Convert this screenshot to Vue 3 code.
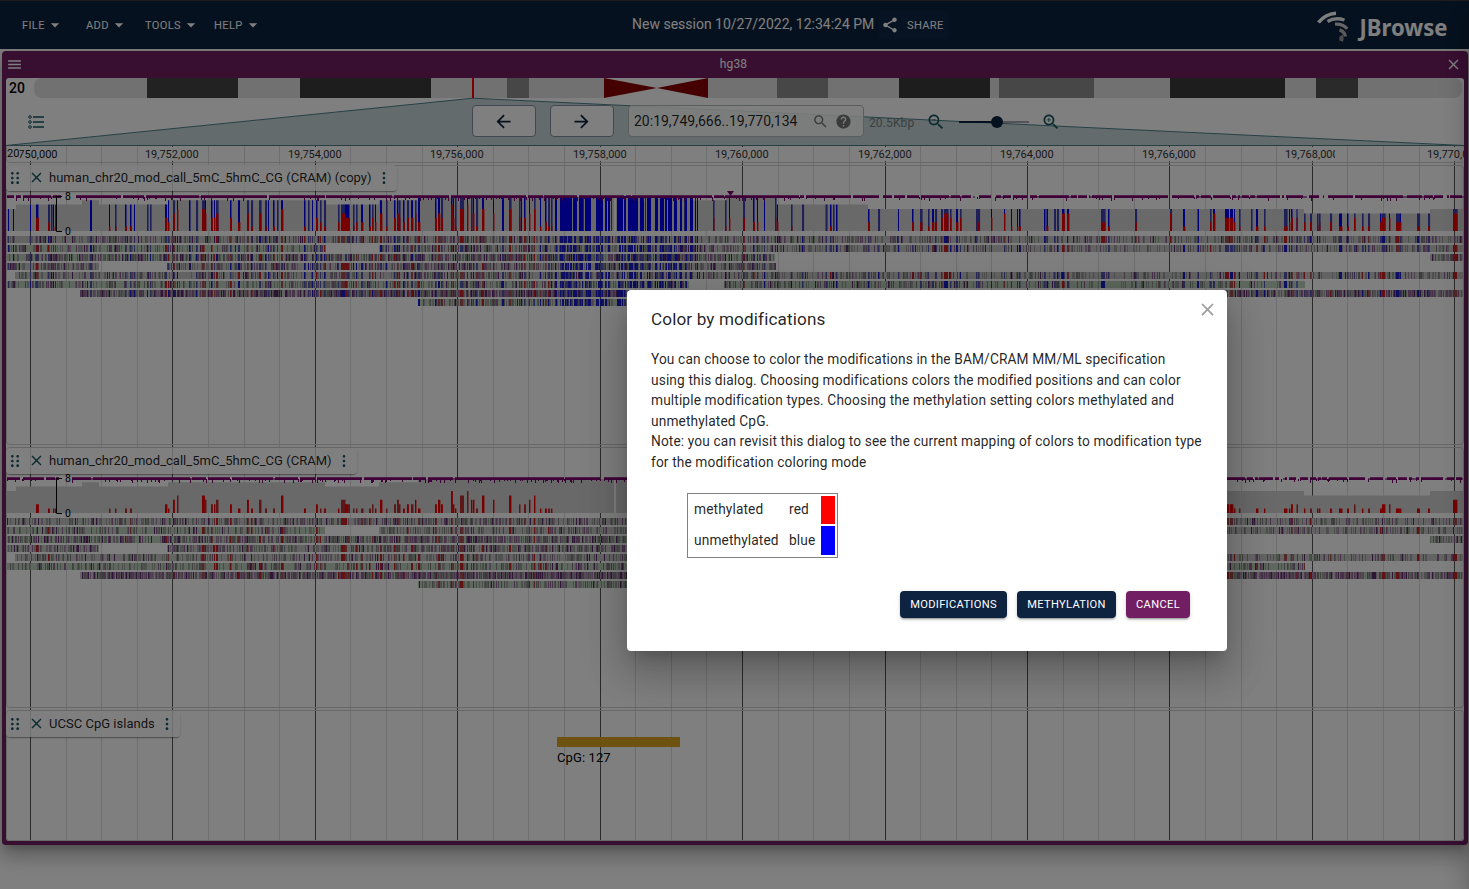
<script setup>
const icons = {
  drop: 'M7 10l5 5 5-5z',
  share: 'M18 16.08c-.76 0-1.44.3-1.96.77L8.91 12.7c.05-.23.09-.46.09-.7s-.04-.47-.09-.7l7.05-4.11c.54.5 1.25.81 2.04.81 1.66 0 3-1.34 3-3s-1.34-3-3-3-3 1.34-3 3c0 .24.04.47.09.7L8.04 9.81C7.5 9.31 6.79 9 6 9c-1.66 0-3 1.34-3 3s1.34 3 3 3c.79 0 1.5-.31 2.04-.81l7.12 4.16c-.05.21-.08.43-.08.65 0 1.61 1.31 2.92 2.92 2.92 1.61 0 2.92-1.31 2.92-2.92s-1.31-2.92-2.92-2.92z',
  close: 'M19 6.41L17.59 5 12 10.59 6.41 5 5 6.41 10.59 12 5 17.59 6.41 19 12 13.41 17.59 19 19 17.59 13.41 12z',
  back: 'M20 11H7.83l5.59-5.59L12 4l-8 8 8 8 1.41-1.41L7.83 13H20v-2z',
  forward: 'M12 4l-1.41 1.41L16.17 11H4v2h12.17l-5.58 5.59L12 20l8-8z',
  search: 'M15.5 14h-.79l-.28-.27C15.41 12.59 16 11.11 16 9.5 16 5.91 13.09 3 9.5 3S3 5.91 3 9.5 5.91 16 9.5 16c1.61 0 3.09-.59 4.23-1.57l.27.28v.79l5 4.99L20.49 19l-4.99-5zm-6 0C7.01 14 5 11.99 5 9.5S7.01 5 9.5 5 14 7.01 14 9.5 11.99 14 9.5 14z',
  help: 'M12 2C6.48 2 2 6.48 2 12s4.48 10 10 10 10-4.48 10-10S17.52 2 12 2zm1 17h-2v-2h2v2zm2.07-7.75l-.9.92C13.45 12.9 13 13.5 13 15h-2v-.5c0-1.1.45-2.1 1.17-2.83l1.24-1.26c.37-.36.59-.86.59-1.41 0-1.1-.9-2-2-2s-2 .9-2 2H8c0-2.21 1.79-4 4-4s4 1.79 4 4c0 .88-.36 1.68-.93 2.25z',
  zoomOut: 'M15.5 14h-.79l-.28-.27C15.41 12.59 16 11.11 16 9.5 16 5.91 13.09 3 9.5 3S3 5.91 3 9.5 5.91 16 9.5 16c1.61 0 3.09-.59 4.23-1.57l.27.28v.79l5 4.99L20.49 19l-4.99-5zm-6 0C7.01 14 5 11.99 5 9.5S7.01 5 9.5 5 14 7.01 14 9.5 11.99 14 9.5 14zM7 9h5v1H7z',
  zoomIn: 'M15.5 14h-.79l-.28-.27C15.41 12.59 16 11.11 16 9.5 16 5.91 13.09 3 9.5 3S3 5.91 3 9.5 5.91 16 9.5 16c1.61 0 3.09-.59 4.23-1.57l.27.28v.79l5 4.99L20.49 19l-4.99-5zm-6 0C7.01 14 5 11.99 5 9.5S7.01 5 9.5 5 14 7.01 14 9.5 11.99 14 9.5 14zm2.5-4h-2v2H9v-2H7V9h2V7h1v2h2v1z',
  menu: 'M3 18h18v-2H3v2zm0-5h18v-2H3v2zm0-7v2h18V6H3z',
  drag: 'M10 19c0 1.1-.9 2-2 2s-2-.9-2-2 .9-2 2-2 2 .9 2 2zm-2-9c-1.1 0-2 .9-2 2s.9 2 2 2 2-.9 2-2-.9-2-2-2zm0-7c-1.1 0-2 .9-2 2s.9 2 2 2 2-.9 2-2-.9-2-2-2zm8 4c1.1 0 2-.9 2-2s-.9-2-2-2-2 .9-2 2 .9 2 2 2zm0 3c-1.1 0-2 .9-2 2s.9 2 2 2 2-.9 2-2-.9-2-2-2zm0 7c-1.1 0-2 .9-2 2s.9 2 2 2 2-.9 2-2-.9-2-2-2z',
  more: 'M12 7c1.1 0 2-.9 2-2s-.9-2-2-2-2 .9-2 2 .9 2 2 2zm0 3c-1.1 0-2 .9-2 2s.9 2 2 2 2-.9 2-2-.9-2-2-2zm0 7c-1.1 0-2 .9-2 2s.9 2 2 2 2-.9 2-2-.9-2-2-2z',
}
const menus = ['FILE', 'ADD', 'TOOLS', 'HELP']

const bands = [
  [147, 91, '#444'], [300, 131, '#3a3a3a'], [507, 22, '#8f8f8f'], [777, 51, '#8f8f8f'],
  [899, 91, '#3a3a3a'], [999, 95, '#8f8f8f'], [1170, 115, '#3a3a3a'], [1316, 42, '#555'],
]

// Grid lines every 500 bp, labelled every 2,000 bp
const majors = []
const minors = []
for (let i = 0; i < 41; i++) {
  const x = Math.floor(30.4 + i * 35.61)
  if (i % 4 === 0) majors.push({ x, label: '19,' + (750 + i / 2) + ',000' })
  else if (x < 1463) minors.push(x)
}

function rng(seed) {
  let s = seed
  return () => {
    s = (s * 1664525 + 1013904223) % 4294967296
    return s / 4294967296
  }
}
const rect = (x, y, w, h) => `M${x.toFixed(1)} ${y.toFixed(1)}h${w}v${h}h${-w}z`

// Depth profile: [start, end, reads]
const depth = [
  [7, 16, 5], [16, 82, 6], [82, 99, 7], [99, 168, 6], [168, 325, 7], [325, 379, 6], [379, 418, 7],
  [418, 614, 8], [616, 690, 8], [690, 726, 7], [726, 776, 8], [776, 868, 6], [868, 1304, 5], [1304, 1430, 4], [1430, 1463, 5],
]
// CpG sites: position, methylated reads, width
const sites = [
  [8, 0, 1], [13, 0, 1], [30, 0, 1], [36, 3, 2.5], [48, 2, 1.5], [51, 0, 1], [53, 1, 1], [55, 1, 1], [90, 0, 2], [109, 1, 1], [115, 1, 1],
  [125, 1, 1.5], [130, 1, 1.5], [134, 0, 1], [147, 0, 1], [150, 0, 1], [165, 3, 2], [168, 2, 1], [173, 4, 1.5], [177, 5, 1], [189, 0, 1.5],
  [196, 0, 1.5], [202, 5, 2.5], [205, 4, 1], [211, 3, 1.5], [214, 3, 1], [216, 4, 2], [230, 3, 1.5], [238, 2, 2], [247, 4, 1.5], [251, 1, 1.5],
  [259, 4, 2], [265, 1, 1.5], [268, 0, 1], [273, 1, 1.5], [277, 0, 1], [281, 5, 2], [304, 1, 1.5], [308, 0, 1], [312, 0, 1], [316, 3, 1.5],
  [320, 2, 1], [324, 1, 1.5], [338, 2, 1], [341, 4, 4], [345, 3, 2], [347, 3, 2.5], [353, 1, 1], [356, 2, 1], [361, 2, 2], [369, 1, 1.5],
  [372, 3, 1], [375, 2, 1], [380, 4, 2], [386, 1, 1], [394, 3, 1.5], [397, 4, 1.5], [399, 3, 1], [403, 2, 1.5], [407, 3, 1.5], [411, 3, 2],
  [415, 4, 1], [418, 2, 2], [435, 3, 1.5], [438, 4, 2], [441, 3, 1.5], [451, 6, 1.5], [453, 3, 1], [455, 1, 1], [460, 5, 3.5], [467, 6, 1],
  [471, 4, 1], [473, 4, 1], [476, 1, 1.5], [482, 5, 2], [493, 4, 1], [502, 0, 2], [509, 5, 2], [519, 3, 1], [521, 0, 1], [524, 3, 1.5],
  [529, 4, 1], [534, 5, 1], [540, 1, 1], [545, 2, 1.5], [548, 1, 1.5], [551, 1, 1], [713, 3, 1], [725, 1, 1], [729, 3, 1], [743, 3, 1.5],
  [753, 2, 1.5], [757, 2, 1], [764, 0, 1], [775, 3, 1], [777, 2, 1], [791, 1, 1], [802, 0, 1.5], [825.5, 0, 1.5], [830, 1, 1.5], [833, 0, 1],
  [836, 0, 1.5], [868, 2, 1.5], [878, 0, 1.5], [898, 0, 1], [912, 2, 1.5], [920, 2, 2], [928, 1, 1], [932, 2, 2], [935, 2, 1.5], [941, 3, 1.5],
  [944, 4, 4], [950, 3, 1], [956, 2, 2], [960, 3, 1], [976, 0, 1.5], [978, 2, 1.5], [991, 3, 1], [1004, 4, 1], [1011, 1, 1], [1017, 1, 1],
  [1019, 1, 1.5], [1044, 0, 1.5], [1046.5, 1, 1.5], [1054, 0, 1.5], [1057, 0, 1.5], [1062, 4, 2.5], [1067, 4, 2], [1101, 2, 4], [1108, 1, 1.5],
  [1135, 2, 1.5], [1170, 4, 1.5], [1183, 1, 2], [1197.5, 0, 1.5], [1210, 2, 1], [1213, 4, 2], [1225, 3, 4], [1230, 3, 3], [1234, 2, 1],
  [1239, 1, 1], [1251, 0, 1], [1256, 1, 2], [1264, 1, 1], [1284, 1, 3], [1289, 2, 1], [1291, 3, 1.5], [1296.5, 3, 1], [1304, 2, 1],
  [1310, 2, 1.5], [1317, 1, 1], [1319, 2, 1], [1330, 2, 1.5], [1339, 1, 3], [1347, 1, 1.5], [1354, 3, 1], [1362, 1, 1], [1368, 1, 1.5],
  [1380, 2, 1.5], [1382, 3, 3], [1389, 3, 1], [1396, 2, 3.5], [1400, 2, 1], [1417, 1, 2.5], [1428, 1, 1.5], [1453, 4, 4],
]
// Fully unmethylated stretch
const island = [
  [555, 2], [560, 12], [573, 4], [579, 4], [585, 6], [596, 7], [605, 2], [608, 2], [617, 6], [624, 2], [628, 10], [640, 4],
  [647, 4], [655, 3], [660, 4], [665, 2], [668, 4], [674, 3], [680, 2], [685, 2], [690, 3], [695, 1], [697, 1],
]
const level = x => (depth.find(d => x >= d[0] && x < d[1]) || [0, 0, 8])[2]
const inSpan = (x, spans) => spans.some(s => x >= s[0] && x < s[1])

// Read rows: spans and base colours, density of mismatches
const gray = '#c6c6c6'
const green = '#bdd0bd'
const reads = [
  { spans: [[7, 1463, gray]], d: 0.5, p: 0.36 },
  { spans: [[7, 325, green], [379, 1463, gray]], d: 0.44, p: 0.28 },
  { spans: [[7, 775, green], [1430, 1463, gray]], d: 0.68, p: 0.5 },
  { spans: [[7, 99, gray], [167, 776, gray]], d: 0.58, p: 0.4 },
  { spans: [[15, 1463, gray]], d: 0.44, p: 0.28 },
  { spans: [[7, 689, green], [724, 1305, green]], d: 0.44, p: 0.28 },
  { spans: [[80, 1463, gray]], d: 0.84, p: 0.62 },
  { spans: [[418, 698, green]], d: 0.47, p: 0.25 },
]

function buildTrack(dy, showBlue, seed) {
  const r = rng(seed)
  const paths = []
  const add = (fill, d) => d && paths.push({ fill, d })
  const zero = 231 + dy
  const unit = 4.4
  let cov = ''
  for (const [a, b, n] of depth) cov += rect(a, zero - n * unit + (n === 8 ? 1 : 0), b - a, n * unit - (n === 8 ? 1 : 0))
  add('#d3d3d3', cov)
  let blue = '', blueSoft = '', red = '', redSoft = ''
  for (const [x, n, w] of sites) {
    const h = level(x) * unit - (level(x) === 8 ? 1 : 0)
    if (showBlue) {
      if (r() < 0.5) blue += rect(x, zero - h, w, h)
      else blueSoft += rect(x, zero - h, w + 0.6, h)
    }
    const m = showBlue ? n : n > 1 ? n - 1 : n
    if (m && (showBlue || r() < 0.6)) red += rect(x, zero - m * unit, w + 0.4, m * unit)
    else if (m) redSoft += rect(x, zero - m * unit, w + 0.5, m * unit)
  }
  if (showBlue) {
    for (const [x, w] of island) blue += rect(x, 196 + dy, w, 35)
    for (let x = 555; x < 698; x += 2 + Math.floor(r() * 3)) if (r() < 0.45) blueSoft += rect(x, 197 + dy, 1, 34)
  }
  add('#4040b0', blueSoft)
  add('#0000f0', blue)
  add('#b83030', redSoft)
  add('#f00000', red)

  // Interbase indicators along the top of the coverage plot
  let dash = '', dashSoft = ''
  for (let x = 7; x < 1463;) {
    let w = 1 + Math.floor(r() * 5)
    const gap = x > 868 || x < 75 ? 0.25 : 0.06
    const open = x > 56 && x < 72
    if (r() > gap) {
      if (!open) dash += rect(x, 195.3 + dy, w, 2.6)
    } else {
      w = Math.min(w, 2)
      if (r() < 0.3 && !open) dashSoft += rect(x, 196 + dy, w, 2)
    }
    if (!open && r() < (x > 418 && x < 700 ? 0.6 : x > 868 ? 0.25 : 0.42)) dash += rect(x, 197 + dy, 1, 2 + Math.floor(r() * 3))
    x += w
  }
  add('#b070b0', dashSoft)
  add('#800070', dash)

  const groups = { '#a0a0a0': '', '#808080': '', '#90a090': '', '#906494': '', '#a084a4': '', '#602c6c': '' }
  const keys = Object.keys(groups)
  reads.forEach((row, i) => {
    const y = 236 + dy + i * 9
    let siteBlue = '', siteRed = '', redMuted = '', bluish = ''
    const marks = { ...groups }
    for (const [a, b, fill] of row.spans) {
      add(fill, rect(a, y, b - a, 7))
      for (let x = a; x < b - 1; x++) {
        const dense = x > 418 && x < 700 ? 1.15 : x > 868 && row.p < 0.5 ? 0.85 : 1
        if (r() > row.d * dense) continue
        let key
        if (r() < row.p) key = r() < 0.5 ? keys[3] : r() < 0.5 ? keys[4] : keys[5]
        else key = r() < 0.5 ? keys[0] : r() < 0.5 ? keys[1] : keys[2]
        marks[key] += rect(x, y, 1, 7)
      }
    }
    for (const k in marks) add(k, marks[k])
    for (const [x, n, w] of sites) {
      if (!inSpan(x, row.spans)) continue
      const t = r()
      if (t < n / 8) {
        if (r() < 0.6) siteRed += rect(x, y, w, 7)
        else redMuted += rect(x, y, w, 7)
      } else if (showBlue && t < 0.8) {
        if (r() < 0.35) siteBlue += rect(x, y, w, 7)
        else bluish += rect(x, y, w, 7)
      }
    }
    if (showBlue) {
      for (const [x, w] of island) {
        if (!inSpan(x, row.spans)) continue
        for (let k = 0; k < w; k++) {
          const t = r()
          if (t < 0.55) siteBlue += rect(x + k, y, 1, 7)
          else if (t < 0.8) bluish += rect(x + k, y, 1, 7)
        }
      }
    }
    add('#5555ac', bluish)
    add('#1c1cc8', siteBlue)
    add('#a85050', redMuted)
    add('#c42424', siteRed)
  })
  return paths
}
const trackPaths = [...buildTrack(0, true, 11), ...buildTrack(282, false, 47)]

const tracks = [
  { name: 'human_chr20_mod_call_5mC_5hmC_CG (CRAM) (copy)', cls: 'first' },
  { name: 'human_chr20_mod_call_5mC_5hmC_CG (CRAM)', cls: 'second' },
  { name: 'UCSC CpG islands', cls: 'third' },
]
const legend = [
  { state: 'methylated', color: 'red' },
  { state: 'unmethylated', color: 'blue' },
]
</script>

<template>
  <div class="app">
    <header class="bar">
      <nav class="menus">
        <button v-for="m in menus" :key="m" class="menu">{{ m }}<svg viewBox="0 0 24 24"><path :d="icons.drop" /></svg></button>
      </nav>
      <span class="session">New session 10/27/2022, 12:34:24 PM</span>
      <button class="share"><svg viewBox="0 0 24 24"><path :d="icons.share" /></svg>SHARE</button>
      <svg class="brand" viewBox="1314 8 136 36">
        <g fill="none">
          <path d="M1318.5 22.5Q1325 14 1336 13.2" stroke="#fff" stroke-width="3.6" />
          <path d="M1327.5 21.5Q1335 17 1344.5 20" stroke="#eee" stroke-width="3.4" />
          <path d="M1335 24.2Q1342.5 23.5 1347.2 28.8" stroke="#ccc" stroke-width="3.2" />
          <path d="M1339.5 29.8Q1344.5 31.5 1345.5 36.5" stroke="#b4b4b4" stroke-width="3.4" />
          <path d="M1340.8 35.8Q1342.3 38 1341 41" stroke="#999" stroke-width="4" />
        </g>
        <text x="1359.5" y="36" textLength="88" lengthAdjust="spacingAndGlyphs">JBrowse</text>
      </svg>
    </header>

    <main class="view">
      <div class="titlebar">
        <svg class="burger" viewBox="0 0 24 24"><path :d="icons.menu" /></svg>
        <span>hg38</span>
        <svg class="shut" viewBox="0 0 24 24"><path :d="icons.close" /></svg>
      </div>

      <div class="content">
        <div class="overview">
          <svg class="canvas" viewBox="6 78 1458 68">
            <clipPath id="chrom"><rect x="34" y="78" width="1428" height="20" rx="8" /></clipPath>
            <g clip-path="url(#chrom)">
              <rect x="34" y="78" width="1428" height="20" fill="#e2e2e2" />
              <rect v-for="b in bands" :key="b[0]" :x="b[0]" y="78" :width="b[1]" height="20" :fill="b[2]" />
              <rect x="604" y="78" width="104" height="20" fill="#fff" />
              <path d="M604 78L657 88L604 98zM708 78L657 88L708 98z" fill="#8b0000" />
            </g>
            <text class="refname" x="9" y="93">20</text>
            <path d="M6 145.5L472 98.3H474.5L1464 145.5z" fill="#c6d6d8" stroke="#4d8189" />
            <rect x="472" y="78" width="2" height="20" fill="#f00" />
          </svg>
          <div class="controls">
            <svg class="selector" viewBox="0 0 16 14">
              <path d="M5 2h11M5 7h11M5 12h11" stroke-width="1.5" />
              <circle cx="2" cy="2" r="1.3" /><circle cx="2" cy="7" r="1.3" /><circle cx="2" cy="12" r="1.3" />
            </svg>
            <button class="pan"><svg viewBox="0 0 24 24"><path :d="icons.back" /></svg></button>
            <button class="pan"><svg viewBox="0 0 24 24"><path :d="icons.forward" /></svg></button>
            <div class="location">
              <span>20:19,749,666..19,770,134</span>
              <svg viewBox="0 0 24 24"><path :d="icons.search" /></svg>
              <svg viewBox="0 0 24 24"><path :d="icons.help" /></svg>
            </div>
            <span class="bp">20.5Kbp</span>
            <svg class="zoom" viewBox="0 0 24 24"><path :d="icons.zoomOut" /></svg>
            <div class="slider"><i></i></div>
            <svg class="zoom" viewBox="0 0 24 24"><path :d="icons.zoomIn" /></svg>
          </div>
        </div>

        <div class="tracks">
          <svg class="canvas" viewBox="6 146 1458 695">
            <g fill="#dcdcdc"><rect v-for="x in minors" :key="x" :x="x" y="146" width="1" height="695" /></g>
            <g fill="#555"><rect v-for="m in majors" :key="m.x" :x="m.x" y="146" width="1" height="695" /></g>
            <g fill="none" stroke="#d0d0d0">
              <rect x="6.5" y="142.5" width="1457" height="20" rx="3" />
              <rect x="6.5" y="165.5" width="1457" height="279" rx="3" />
              <rect x="6.5" y="447.5" width="1457" height="260" rx="3" />
              <rect x="6.5" y="710.5" width="1457" height="130" rx="3" />
            </g>
            <g class="ticks">
              <template v-for="(m, i) in majors" :key="m.x">
                <rect :x="m.x - (i ? 27 : 23)" y="147" :width="i ? 56 : 51" height="14" fill="#fff" />
                <text v-if="i" :x="m.x - 0.2" y="158">{{ m.label }}</text>
                <text v-else class="start" x="18.3" y="158">750,000</text>
              </template>
              <rect x="1335" y="148" width="6" height="12" fill="#fff" />
              <rect x="7" y="147" width="12.5" height="14" fill="#fff" />
              <text class="start" x="7" y="157">20</text>
            </g>
            <path v-for="(p, i) in trackPaths" :key="i" :fill="p.fill" :d="p.d" />
            <path d="M727 191h7l-3.5 5z" fill="#800070" />
            <g v-for="y in [196, 478]" :key="y">
              <path :d="`M62 ${y + 0.5}H56.5V${y + 35.5}H62`" fill="none" stroke="#000" />
              <text class="axis" x="65" :y="y + 4">8</text>
              <text class="axis" x="65" :y="y + 39">0</text>
            </g>
            <rect x="557" y="737" width="123" height="10" fill="#daa520" />
            <text class="feature" x="557" y="762">CpG: 127</text>
          </svg>
          <section v-for="t in tracks" :key="t.name" :class="['track', t.cls]">
            <div class="label">
              <svg class="drag" viewBox="0 0 24 24"><path :d="icons.drag" /></svg>
              <svg class="x" viewBox="0 0 24 24"><path :d="icons.close" /></svg>
              <span>{{ t.name }}</span>
              <svg class="more" viewBox="0 0 24 24"><path :d="icons.more" /></svg>
            </div>
          </section>
        </div>
      </div>
    </main>

    <div class="drawer"></div>
    <div class="backdrop">
      <div class="dialog">
        <svg class="dismiss" viewBox="0 0 24 24"><path :d="icons.close" /></svg>
        <h2>Color by modifications</h2>
        <p>You can choose to color the modifications in the BAM/CRAM MM/ML specification using&nbsp;this dialog. Choosing modifications colors the modified positions and can color multiple modification types. Choosing the methylation setting colors methylated and unmethylated CpG.<br />Note: you can revisit this dialog to see the current mapping of colors to modification type for the modification coloring mode</p>
        <div class="legend">
          <template v-for="l in legend" :key="l.state">
            <span>{{ l.state }}</span><span>{{ l.color }}</span><i :class="l.color"></i>
          </template>
        </div>
        <div class="actions">
          <button class="modifications">MODIFICATIONS</button>
          <button class="methylation">METHYLATION</button>
          <button class="cancel">CANCEL</button>
        </div>
      </div>
    </div>
  </div>
</template>

<style>
html, body { margin: 0; height: 100%; overflow: hidden; background: #fff; }
</style>

<style scoped>
.app { position: relative; width: 1469px; height: 889px; overflow: hidden; font-family: Roboto, "Liberation Sans", sans-serif; color: rgba(0, 0, 0, .87); background: #fff; }
.app *, .app { box-sizing: border-box; }
button { font: inherit; border: 0; padding: 0; margin: 0; background: none; color: inherit; }
svg { display: block; flex: none; }
.bar { position: relative; z-index: 1; height: 49px; border-top: 1px solid #3a3a3a; background: #0d233f; color: #fff; display: flex; align-items: center; }
.bar svg { fill: currentColor; }
.menus { display: grid; grid-template-columns: 64px 59px 69px 1fr; width: 632px; padding-left: 22px; }
.menu { display: flex; align-items: center; font-size: 11.14px; letter-spacing: .32px; }
.menu svg { width: 20px; height: 20px; }
.session { width: 247px; font-size: 14px; letter-spacing: 0; white-space: nowrap; position: relative; top: -1px; }
.share { display: flex; align-items: center; gap: 8px; width: 70px; height: 28px; padding-left: 2px; border-radius: 4px; background: #0f2744; font-size: 11.14px; letter-spacing: .32px; }
.share svg { width: 18px; height: 18px; }
.brand { width: 136px; height: 36px; margin-left: auto; margin-right: 19px; position: relative; top: 1px; }
.brand text { font: 700 22.5px "Noto Sans", "Open Sans", sans-serif; }
.view { display: flex; flex-direction: column; margin: 2px 1px 0 2px; height: 794px; padding: 0 4px 4px; border-radius: 4px; background: #721e63; box-shadow: 0 7px 8px -4px rgba(0,0,0,.2), 0 12px 17px 2px rgba(0,0,0,.14), 0 5px 22px 4px rgba(0,0,0,.12); }
.titlebar { height: 27px; display: flex; align-items: center; justify-content: space-between; padding: 0 2px 0 0; color: #fff; font-size: 12px; letter-spacing: .13px; }
.titlebar span { position: relative; left: -.5px; top: -1px; }
.titlebar svg { fill: #fff; width: 17px; height: 17px; }
.content { width: 1458px; height: 763px; background: #fff; border-radius: 3px; overflow: hidden; }
.overview { position: relative; height: 68px; padding-top: 20px; }
.canvas { position: absolute; left: 0; top: 0; width: 100%; height: 100%; }
.refname { font-size: 14px; font-weight: 500; fill: #000; }
.controls { position: relative; height: 46px; display: flex; align-items: center; padding-left: 22px; }
.selector { width: 16px; height: 14px; margin: 2px 428px 0 0; fill: none; stroke: #135560; }
.pan { width: 63.5px; height: 32px; margin-right: 14.5px; border: 1px solid #8691a0; border-radius: 4px; background: #fff; display: grid; place-items: center; }
.pan svg { width: 21px; height: 21px; fill: #0d233f; }
.location { width: 236px; height: 32px; border: 1px solid #b5bcbd; border-radius: 4px; background: rgba(255,255,255,.85); display: flex; align-items: center; padding-left: 5px; }
.location span { width: 178px; font-size: 14px; }
.location svg { width: 17px; height: 17px; margin-right: 6px; fill: #757575; }
.bp { width: 62px; padding: 3px 0 0 5px; font-size: 12px; letter-spacing: .13px; color: #758082; }
.zoom { width: 20px; height: 20px; margin-top: 2px; fill: #135560; }
.slider { width: 70px; height: 2px; margin: 2px 12px 0 13px; background: linear-gradient(90deg, #0d233f 38px, #a3a7b2 38px); display: flex; align-items: center; }
.slider i { width: 12px; height: 12px; margin-left: 32px; border-radius: 50%; background: #0d233f; flex: none; }
.tracks { position: relative; height: 695px; padding-top: 19px; }
.ticks text { font-size: 11px; text-anchor: middle; fill: #333; }
.ticks text.start { font-size: 11px; text-anchor: start; fill: #111; }
.axis { font-size: 10.5px; fill: #000; }
.feature { font-size: 13px; letter-spacing: .1px; fill: #000; }
.track { position: relative; }
.first { height: 283px; }
.second { height: 263px; }
.label { display: inline-flex; align-items: center; height: 26px; padding: 0 5px 2px 1px; border-radius: 4px; background: rgba(255,255,255,.8); box-shadow: 0 2px 1px -1px rgba(0,0,0,.2), 0 1px 1px rgba(0,0,0,.14), 0 1px 3px rgba(0,0,0,.12); font-size: 13px; letter-spacing: .02px; white-space: nowrap; }
.label svg { fill: #135560; position: relative; top: .5px; }
.drag { width: 16px; height: 16px; }
.x { width: 17px; height: 17px; margin: 0 4px 0 4.5px; }
.label span { padding-left: .5px; }
.more { width: 16px; height: 16px; margin-left: 4px; }
.drawer { position: absolute; left: 1472px; top: 0; width: 100px; height: 889px; z-index: 2; box-shadow: 0 8px 10px -5px rgba(0,0,0,.2), 0 16px 24px 2px rgba(0,0,0,.14), 0 6px 30px 5px rgba(0,0,0,.12); }
.backdrop { position: absolute; inset: 0; z-index: 3; background: rgba(0,0,0,.5); padding: 290px 0 0 627px; }
.dialog { position: relative; width: 600px; height: 361px; padding: 16px 24px; background: #fff; border-radius: 4px; box-shadow: 0 11px 15px -7px rgba(0,0,0,.2), 0 24px 38px 3px rgba(0,0,0,.14), 0 9px 46px 8px rgba(0,0,0,.12); }
.dismiss { position: absolute; right: 9px; top: 9px; width: 21px; height: 21px; fill: #9e9e9e; }
h2 { margin: 0 0 15.6px; font-size: 17.14px; font-weight: 400; line-height: 27.4px; letter-spacing: .13px; }
p { margin: 0; width: 552px; font-size: 13.714px; line-height: 20.5px; letter-spacing: .129px; }
.legend { display: grid; grid-template-columns: 93px 30px 14px; grid-template-rows: 28px 29px; gap: 2px; width: 151px; height: 65px; margin: 21px 0 0 36px; padding: 2px 2px 2px 6px; border: 1px solid gray; font-size: 13.714px; line-height: 18px; letter-spacing: .129px; align-items: center; }
.legend span { padding-bottom: 2px; }
.legend i { height: 100%; }
.red { background: #f00; }
.blue { background: #00f; }
.actions { display: flex; gap: 10px; margin: 33px 0 0 249px; }
.actions button { height: 27px; border-radius: 4px; background: #0d233f; color: #fff; font-size: 11.14px; letter-spacing: .32px; box-shadow: 0 3px 1px -2px rgba(0,0,0,.2), 0 2px 2px rgba(0,0,0,.14), 0 1px 5px rgba(0,0,0,.12); }
.modifications { width: 107px; }
.methylation { width: 99px; }
.actions .cancel { width: 64px; background: #721e63; }
</style>
